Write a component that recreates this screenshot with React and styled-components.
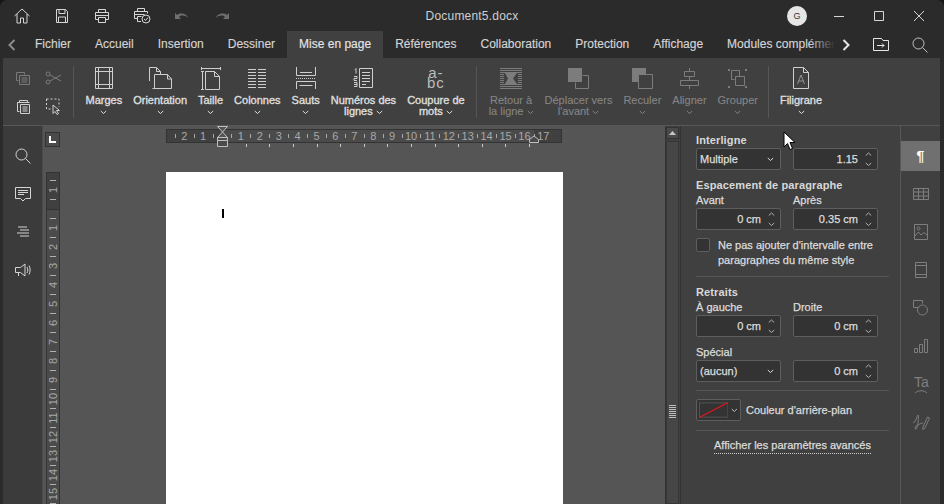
import React from 'react'
import styled, { createGlobalStyle } from 'styled-components'

const GlobalStyle = createGlobalStyle`
  html, body { margin: 0; height: 100%; background: #161616; overflow: hidden; }
  #root { height: 100%; }
  * { box-sizing: border-box; }
`

const Window = styled.div`
  position: relative;
  width: 944px;
  height: 504px;
  display: flex;
  flex-direction: column;
  background: #2b2b2b;
  border-radius: 7px 7px 0 0;
  overflow: hidden;
  font-family: "Liberation Sans", Arial, sans-serif;
  font-size: 11px;
  color: #d8d8d8;
`

const TitleBar = styled.div`
  height: 31px;
  flex: none;
  display: grid;
  grid-template-columns: 1fr auto 1fr;
  align-items: center;
`

const IconRow = styled.div`
  display: flex;
  align-items: center;
  padding-left: ${({ $pad }) => $pad || 0}px;
  padding-right: ${({ $padR }) => $padR || 0}px;
  justify-content: ${({ $end }) => ($end ? 'flex-end' : 'flex-start')};
`

const TitleBtn = styled.div`
  width: 40px;
  height: 31px;
  display: flex;
  align-items: center;
  justify-content: center;
  color: ${({ $off }) => ($off ? '#6e6e6e' : '#d6d6d6')};
`

const DocName = styled.div`
  font-size: 12px;
  letter-spacing: 0.2px;
  color: #cfcfcf;
`

const Avatar = styled.div`
  width: 20px;
  height: 20px;
  margin-right: 12px;
  border-radius: 50%;
  background: #e6e6e6;
  color: #333;
  font-size: 9px;
  display: flex;
  align-items: center;
  justify-content: center;
`

const TabBar = styled.div`
  height: 27px;
  flex: none;
  display: flex;
  align-items: stretch;
`

const ChevronBtn = styled.div`
  flex: none;
  width: ${({ $w }) => $w}px;
  display: flex;
  align-items: center;
  justify-content: center;
  color: ${({ $tone }) => $tone || '#e6e6e6'};
`

const TabStrip = styled.div`
  width: 812px;
  display: flex;
  overflow: hidden;
  position: relative;
  &::after {
    content: '';
    position: absolute;
    right: 0;
    top: 0;
    bottom: 0;
    width: 26px;
    background: linear-gradient(to right, rgba(43, 43, 43, 0), #2b2b2b);
  }
`

const Tab = styled.div`
  flex: none;
  padding: 0 12px;
  font-size: 12px;
  line-height: 26px;
  color: ${({ $active }) => ($active ? '#e4e4e4' : '#d4d4d4')};
  background: ${({ $active }) => ($active ? '#404040' : 'transparent')};
  -webkit-text-stroke: 0.15px currentColor;
`

const TabTools = styled.div`
  display: flex;
  margin-left: 4px;
`

const Ribbon = styled.div`
  height: 68px;
  flex: none;
  margin: 0 4px 0 3px;
  padding: 8px 0 0 3px;
  display: flex;
  align-items: flex-start;
  background: #404040;
  border-bottom: 1px solid #575757;
`

const ClipGrid = styled.div`
  display: grid;
  grid-template-columns: 30px 30px;
  grid-auto-rows: 28px;
  margin: -2px 0 0 2px;
  place-items: center;
`

const ClipCell = styled.div`
  display: flex;
  color: ${({ $off }) => ($off ? '#7a7a7a' : '#d0d0d0')};
`

const Sep = styled.div`
  width: 1px;
  height: 52px;
  flex: none;
  margin: 0 ${({ $r }) => $r ?? 6}px 0 ${({ $l }) => $l ?? 6}px;
  background: #565656;
`

const RibbonItem = styled.div`
  flex: none;
  padding: 0 5.5px;
  display: flex;
  flex-direction: column;
  align-items: center;
  color: ${({ $off }) => ($off ? '#858585' : '#e0e0e0')};
  -webkit-text-stroke: ${({ $off }) => ($off ? '0.1px' : '0.3px')} currentColor;
`

const RibbonIcon = styled.div`
  height: 22px;
  margin-bottom: 6px;
  margin-top: 1px;
  display: flex;
  align-items: center;
  justify-content: center;
  color: ${({ $off }) => ($off ? '#7c7c7c' : '#cfcfcf')};
  -webkit-text-stroke: 0;
`

const RibbonLabel = styled.div`
  text-align: center;
  line-height: 11px;
  white-space: pre;
  font-size: 11px;
`

const HyphenIcon = styled.div`
  font-size: 15px;
  line-height: 10px;
  letter-spacing: 1px;
  text-align: center;
  color: #bdbdbd;
  -webkit-text-stroke: 0;
`

const Body = styled.div`
  flex: 1;
  min-height: 0;
  display: flex;
  margin: 0 4px 0 3px;
`

const LeftRail = styled.div`
  width: 40px;
  flex: none;
  padding-top: 22px;
  display: flex;
  flex-direction: column;
  align-items: center;
  gap: 22px;
  background: #3b3b3b;
  border-right: 1px solid #4a4a4a;
  color: #d4d4d4;
`

const RailIcon = styled.div`
  height: 16px;
  display: flex;
  align-items: center;
  justify-content: center;
`

const Canvas = styled.div`
  flex: 1;
  min-width: 0;
  background: #555555;
  overflow: hidden;
  padding: 3px 0 0 2px;
`

const RulerRow = styled.div`
  display: flex;
  align-items: flex-start;
  height: 43px;
`

const Corner = styled.div`
  width: 15px;
  height: 15px;
  margin-top: 3px;
  border: 1px solid #333;
  background: #4a4a4a;
  display: flex;
  align-items: center;
  justify-content: center;
`

const HRuler = styled.svg`
  display: block;
  margin-left: 106px;
  overflow: visible;
`

const Sheet = styled.div`
  display: flex;
  align-items: flex-start;
  padding-left: 1px;
`

const VRuler = styled.svg`
  display: block;
  flex: none;
`

const Page = styled.div`
  width: 397px;
  height: 340px;
  margin-left: 106px;
  background: #ffffff;
  position: relative;
`

const Caret = styled.div`
  position: absolute;
  left: 56px;
  top: 37px;
  width: 2px;
  height: 9px;
  background: #000;
`

const ScrollTrack = styled.div`
  width: 15px;
  flex: none;
  padding: 1px 1px 0 0;
  display: flex;
  flex-direction: column;
  background: #404040;
  border-left: 1px solid #333;
`

const ScrollUp = styled.div`
  height: 12px;
  background: #4a4a4a;
  border: 1px solid #333;
  display: flex;
  align-items: center;
  justify-content: center;
`

const ScrollThumb = styled.div`
  flex: 1;
  margin-top: 2px;
  display: flex;
  justify-content: center;
  align-items: center;
  background: #464646;
  border: 1px solid #363636;
`

const Grip = styled.div`
  width: 7px;
  height: 13px;
  margin-top: 177px;
  background: repeating-linear-gradient(to bottom, #bdbdbd 0 1px, transparent 1px 2px);
`

const Panel = styled.div`
  width: 220px;
  flex: none;
  padding: 8px 11px 0 15px;
  background: #404040;
  border-left: 1px solid #333;
  color: #dcdcdc;
  -webkit-text-stroke: 0.25px currentColor;
`

const Heading = styled.div`
  font-weight: 700;
  font-size: 11px;
  line-height: 13px;
  letter-spacing: 0.12px;
  -webkit-text-stroke: 0;
  color: #d8d8d8;
  margin-top: ${({ $top }) => $top || 0}px;
`

const FieldGrid = styled.div`
  display: grid;
  grid-template-columns: 85px 85px;
  column-gap: 12px;
  margin-top: ${({ $top }) => $top || 0}px;
`

const FieldLabel = styled.div`
  line-height: 13px;
  height: 14px;
  margin-top: ${({ $top }) => $top || 0}px;
`

const Field = styled.div`
  height: 22px;
  border: 1px solid #5e5e5e;
  border-radius: 2px;
  background: #333333;
  display: flex;
  align-items: center;
  padding: ${({ $select }) => ($select ? '0 6px 0 3px' : '0 3px 0 0')};
  justify-content: ${({ $select }) => ($select ? 'space-between' : 'flex-end')};
  color: #dddddd;
`

const Spin = styled.div`
  width: 11px;
  margin-left: 5px;
  display: flex;
  flex-direction: column;
  gap: 5px;
  align-items: center;
  color: #b5b5b5;
`

const CheckRow = styled.div`
  display: flex;
  gap: 8px;
  margin-top: 8px;
`

const CheckBox = styled.div`
  width: 14px;
  height: 14px;
  flex: none;
  border: 1px solid #5e5e5e;
  border-radius: 2px;
  background: #333333;
`

const CheckText = styled.div`
  line-height: 15px;
`

const Rule = styled.div`
  height: 1px;
  background: #555555;
  margin: ${({ $m }) => $m};
`

const ColorRow = styled.div`
  display: flex;
  align-items: center;
  gap: 5px;
  margin-top: 8px;
`

const ColorBtn = styled.div`
  width: 45px;
  height: 22px;
  border: 1px solid #5e5e5e;
  border-radius: 2px;
  background: #333333;
  padding: 1px 2px;
  display: flex;
  align-items: center;
  gap: 3px;
  color: #c8c8c8;
`

const LinkWrap = styled.div`
  display: flex;
  justify-content: center;
  margin-top: 7px;
`

const AdvancedLink = styled.div`
  line-height: 14px;
  border-bottom: 1px dotted #cfcfcf;
  padding-bottom: 1px;
`

const RightRail = styled.div`
  width: 40px;
  flex: none;
  padding-top: 15px;
  display: flex;
  flex-direction: column;
  gap: 8px;
  background: #404040;
  border-left: 1px solid #575757;
`

const RightTab = styled.div`
  height: 30px;
  display: flex;
  align-items: center;
  justify-content: center;
  background: ${({ $active }) => ($active ? '#707070' : 'transparent')};
  color: ${({ $active }) => ($active ? '#ffffff' : '#7e7e7e')};
`

const Pilcrow = styled.span`
  font-size: 14px;
  font-weight: 700;
`

const Pointer = styled.svg`
  position: absolute;
  left: 783px;
  top: 131px;
`

const Ico = ({ w = 16, h = 16, children, fill = 'none', ...rest }) => (
  <svg width={w} height={h} viewBox={`0 0 ${w} ${h}`} fill={fill} stroke="currentColor" strokeWidth="1" {...rest}>
    {children}
  </svg>
)

const Chev = ({ dir = 'down', color }) => {
  const d = dir === 'down' ? 'M.8 1 3.5 3.500 6.200 1' : 'M.8 3.500 3.500 1 6.200 3.500'
  return (
    <svg width="7" height="5" viewBox="0 0 7 5" fill="none" stroke={color || 'currentColor'} strokeWidth="1">
      <path d={d} />
    </svg>
  )
}

const icons = {
  home: <Ico w={18} h={18}><path d="M1.500 9 9 2l7.500 7M4 7v9h3.500v-5h3v5H14V7" /></Ico>,
  save: <Ico w={16} h={16}><path d="M2.500 1.500h9l2 2v11h-11zM5 1.500v4h6v-4M4.500 14.500v-5.500h7v5.500" /></Ico>,
  print: <Ico w={16} h={16}><path d="M4.500 4.500v-3h7v3M4.500 11.500h-3v-7h13v7h-3M4.500 9.500h7v5h-7zM1.500 7.500h13" /></Ico>,
  quick: <Ico w={18} h={17}><path d="M4.500 4.500v-3h7v3M4.500 11.500h-3v-7h13v2M4.500 9.500h4M4.500 9.500v5h3.500M1.500 7.500h10" /><circle cx="13" cy="12" r="4" /><path d="m11 12 1.500 1.500 2.500-3" /></Ico>,
  undo: <Ico w={16} h={10} fill="currentColor" stroke="none"><path d="M1 2v6h6L5 6c2-2 6-2 9 1-1-4-7-6-11-3z" /></Ico>,
  redo: <Ico w={16} h={10} fill="currentColor" stroke="none"><path d="M15 2v6H9l2-2C9 4 5 4 2 7c1-4 7-6 11-3z" /></Ico>,
  min: <Ico w={12} h={12}><path d="M1 6.500h10" /></Ico>,
  max: <Ico w={12} h={12}><path d="M1.500 1.500h9v9h-9z" /></Ico>,
  close: <Ico w={12} h={12}><path d="m1 1 10 10M11 1 1 11" /></Ico>,
  open: <Ico w={16} h={13}><path d="M.5 12.500V.5h8L10 2.500h5.500v10zM4 7.500h7M9 5.500l2 2-2 2" /></Ico>,
  search: <Ico w={16} h={16}><circle cx="6.500" cy="6.500" r="5.500" /><path d="m10.500 10.500 5 5" /></Ico>,
  copy: <Ico w={16} h={14}><path d="M1.500 1.500h8v2M1.500 1.500v8h2M4.500 4.500h10v9h-10zM6.500 7h6M6.500 9h6M6.500 11h6" /></Ico>,
  scissors: <Ico w={17} h={14}><circle cx="3" cy="3" r="2" /><circle cx="3" cy="11" r="2" /><path d="M5 4l11 6M5 10l11-6" /></Ico>,
  paste: <Ico w={15} h={15}><path d="M3.500 3.500h-2v9h2M3.500 1.500h8v2h-8zM4.500 5.500h9v9h-9zM6.500 8h5M6.500 10h5M6.500 12h5" /><path d="M1.500 3.500h12" /></Ico>,
  select: <Ico w={15} h={17}><path d="M.5 1h12.500v8M.5 1v10h5" strokeDasharray="2 2" /><path d="M7 7v8.500l2-2 2 3 1.500-1-2-3h3z" /></Ico>,
  margins: <Ico w={18} h={22}><path d="M.5.500h17v21H.5zM3.500.500v21M14.500.500v21M.5 4.500h17M.5 17.500h17" /></Ico>,
  orient: <Ico w={23} h={22}><path d="M.5 14V.500h7l4 4V7M7.500.500v4h4M5.500 21.500h-2M5.500 7.500v14h17V12l-4-4.500zM18.500 7.500V12h4" /></Ico>,
  size: <Ico w={20} h={23}><path d="M.5 1.500h19M.5 0v3M19.500 0v3M1.500 4v19M0 4.500h3M0 22.500h3M4.500 4.500h9l5 5v13h-14zM13.500 4.500v5h5" /></Ico>,
  columns: <Ico w={18} h={20}><path d="M0 1.500h8M10 1.500h8M0 4.500h8M10 4.500h8M0 7.500h8M10 7.500h8M0 10.500h8M10 10.500h8M0 13.500h8M10 13.500h8M0 16.500h8M10 16.500h8M0 19.500h8M10 19.500h8" /></Ico>,
  breaks: <Ico w={20} h={22}><path d="M.5 0v8.500h19V0M4 5.500h12" /><path d="M0 11.500h20" strokeDasharray="1 1" /><path d="M.5 22v-7.500h19V22M3.500 18.500h13" /></Ico>,
  numbers: <Ico w={20} h={20}><path d="M6.500.500h13v19h-13zM9 4.500h8M9 7.500h8M9 10.500h8M9 13.500h8M9 16.500h4M2 1.500l1-1v5M1 8.500h3v2H1v2h3M1 14.500h3v4H1M1 16.500h3" /></Ico>,
  retour: <Ico w={22} h={21}><path d="M0 .500h22M0 2.500h22M0 4.500h22M0 16.500h22M0 18.500h22M0 20.500h22M0 6.500h4M0 8.500h4M0 10.500h4M0 12.500h4M0 14.500h4M18 6.500h4M18 8.500h4M18 10.500h4M18 12.500h4M18 14.500h4" /><path d="M5 5h12l-4 5.500 4 5.500H5l3-5.500z" fill="currentColor" stroke="none" /></Ico>,
  front: <Ico w={21} h={21}><path d="M14.500 7.500h6v13h-13v-6" /><path d="M0 0h14v14H0z" fill="currentColor" stroke="none" /></Ico>,
  back: <Ico w={21} h={21}><path d="M0 0h14v6H6v8H0z" fill="currentColor" stroke="none" /><path d="M6.500 6.500h14v14h-14z" /></Ico>,
  align: <Ico w={19} h={21}><path d="M9.500 0v4M9.500 8v5M9.500 17v4M4.500 3.500h10v5h-10zM.5 12.500h18v5H.5z" /></Ico>,
  group: <Ico w={21} h={21}><path d="M4.500 2.500h8v6M4.500 2.500v9h3M8.500 8.500h9v9h-9z" /><path d="M1 1h2v2H1zM10 1h2M18 1h2v2h-2zM1 18h2v2H1zM18 18h2v2h-2z" fill="currentColor" stroke="none" /></Ico>,
  water: <Ico w={16} h={22}><path d="M.5.500h10l5 5v16H.5zM10.500.500v5h5" /><path d="m4.500 17 3.500-9 3.500 9M5.700 14h4.600" opacity=".55" /></Ico>,
  comment: <Ico w={16} h={15}><path d="M.5.500h15v11h-5L8 14l-2.500-2.500h-5zM3 3.500h10M3 5.500h10M3 7.500h6" /></Ico>,
  outline: <Ico w={14} h={12}><path d="M2 1h9M4 4h9M1 7h12M4 10h9" /></Ico>,
  speak: <Ico w={16} h={14}><path d="M.5 4.500h5L10 1v12L5.500 9.500h-5zM3.500 9.500V13M12 4c1 2 1 4 0 6M14 2.500c1.500 3 1.500 6 0 9" /></Ico>,
  table: <Ico w={16} h={12}><path d="M.5.500h15v11H.5zM.5 4h15M.5 8h15M5.500.500v11M10.500.500v11" /></Ico>,
  image: <Ico w={14} h={16}><path d="M.5.500h13v15H.5zM1 12l3.500-4L7 11l3-2.500 3.500 3" /><circle cx="4.500" cy="4.500" r="1.500" /></Ico>,
  header: <Ico w={12} h={16}><path d="M.5.500h11v15H.5zM.5 3.500h11M.5 12.500h11" /></Ico>,
  shape: <Ico w={15} h={16}><path d="M5.500 7.500h-5v-7h9v3" /><circle cx="9.500" cy="10" r="5" /></Ico>,
  chart: <Ico w={14} h={14}><path d="M.5 9.500h3v4h-3zM5.500 5.500h3v8h-3zM10.500.500h3v13h-3z" /></Ico>,
  sign: <Ico w={18} h={18}><path d="M1 10c3-1 4-7 5-8 1 0 0 6 0 8s-1 5-2 6-1-2 0-3c3-2 6-3 7-3M11 14l4.500-10 2 1-4.500 10-2.200 1.500z" /></Ico>,
  lcorner: <svg width="7" height="7" viewBox="0 0 7 7"><path d="M0 0h2v5h5v2H0z" fill="#fff" /></svg>,
}

const tabs = ['Fichier', 'Accueil', 'Insertion', 'Dessiner', 'Mise en page', 'Références', 'Collaboration', 'Protection', 'Affichage', 'Modules complémentaires']

const groupA = [
  { icon: 'margins', label: 'Marges' },
  { icon: 'orient', label: 'Orientation' },
  { icon: 'size', label: 'Taille' },
  { icon: 'columns', label: 'Colonnes' },
  { icon: 'breaks', label: 'Sauts' },
  { icon: 'numbers', label: 'Numéros des', second: 'lignes' },
  { hyphen: true, label: 'Coupure de', second: 'mots' },
]

const groupB = [
  { icon: 'retour', label: 'Retour à', second: 'la ligne' },
  { icon: 'front', label: 'Déplacer vers', second: "l'avant" },
  { icon: 'back', label: 'Reculer' },
  { icon: 'align', label: 'Aligner' },
  { icon: 'group', label: 'Grouper' },
]

const Item = ({ it, off }) => (
  <RibbonItem $off={off}>
    <RibbonIcon $off={off}>
      {it.hyphen ? <HyphenIcon>a-<br />bc</HyphenIcon> : icons[it.icon]}
    </RibbonIcon>
    <RibbonLabel>
      {it.label}
      <br />
      {it.second ? <>{it.second} <Chev /></> : <Chev />}
    </RibbonLabel>
  </RibbonItem>
)

const SpinField = ({ value }) => (
  <Field>
    {value}
    <Spin><Chev dir="up" /><Chev /></Spin>
  </Field>
)

const SelectField = ({ value }) => (
  <Field $select>
    {value}
    <Chev />
  </Field>
)

// ruler tick data is easier to keep as plain numbers
const hNums = [-2, -1, 1, 2, 3, 4, 5, 6, 7, 8, 9, 10, 11, 12, 13, 14, 15, 16, 17]
const hTabs = [80, 103, 127, 151, 174, 198, 221, 245, 269, 292, 316, 339, 363]

const HorizontalRuler = () => {
  const ox = 56
  const step = 18.9
  return (
    <HRuler width="400" height="22" viewBox="0 0 400 22">
      <rect x=".5" y=".5" width="395" height="13" fill="#4b4b4b" stroke="#333" />
      <rect x="1" y="1" width={ox - 1} height="12" fill="#404040" />
      <rect x="368" y="1" width="27" height="12" fill="#404040" />
      {hNums.map(n => (
        <text key={n} x={ox + n * step} y="11" textAnchor="middle" fontSize="11" fill="#a8a8a8" fontFamily="Liberation Sans">{Math.abs(n)}</text>
      ))}
      {Array.from({ length: 20 }, (_, i) => i - 3).map(i => (
        <rect key={i} x={Math.round(ox + (i + 0.5) * step)} y="5" width="1" height="4" fill="#a8a8a8" />
      ))}
      {hTabs.map(x => <rect key={x} x={x} y="15" width="1" height="3" fill="#c8c8c8" />)}
      <path d="M51.500-2.500h10L56.500 3zM51.500 8.500 56.500 3l5 5.500z" fill="#555" stroke="#c0c0c0" />
      <path d="M51.500 11.500h10v6h-10zM51.500 8.500h10v3h-10z" fill="#4b4b4b" stroke="#c0c0c0" />
      <path d="M363.500 13.500v-3l4.500-3.500 4.500 3.500v3z" fill="#4b4b4b" stroke="#c0c0c0" />
    </HRuler>
  )
}

const vNums = [{ n: 1, y: 18 }, ...Array.from({ length: 15 }, (_, i) => ({ n: i + 1, y: 56 + i * 19 }))]
const vTicks = [8, 27, 46, 65, 84, 103, 122, 141, 160, 179, 198, 217, 236, 255, 274, 293, 312, 331]

const VerticalRuler = () => (
  <VRuler width="14" height="340" viewBox="0 0 14 340">
    <rect x=".5" y=".5" width="13" height="339" fill="#4b4b4b" stroke="#333" />
    <rect x="1" y="1" width="12" height="36" fill="#404040" />
    <rect x="1" y="37" width="12" height="1" fill="#333" />
    {vNums.map(({ n, y }, i) => (
      <text key={i} x="0" y="0" transform={`translate(11 ${y}) rotate(-90)`} textAnchor="middle" fontSize="11" fill="#a8a8a8" fontFamily="Liberation Sans">{n}</text>
    ))}
    {vTicks.map(y => (
      <rect key={y} x="4" y={y} width="6" height="1" fill="#b0b0b0" />
    ))}
  </VRuler>
)

export default function App() {
  return (
    <>
      <GlobalStyle />
      <Window>
        <TitleBar>
          <IconRow $pad={2}>
            <TitleBtn>{icons.home}</TitleBtn>
            <TitleBtn>{icons.save}</TitleBtn>
            <TitleBtn>{icons.print}</TitleBtn>
            <TitleBtn>{icons.quick}</TitleBtn>
            <TitleBtn $off>{icons.undo}</TitleBtn>
            <TitleBtn $off>{icons.redo}</TitleBtn>
          </IconRow>
          <DocName>Document5.docx</DocName>
          <IconRow $end $padR={5}>
            <Avatar>G</Avatar>
            <TitleBtn>{icons.min}</TitleBtn>
            <TitleBtn>{icons.max}</TitleBtn>
            <TitleBtn>{icons.close}</TitleBtn>
          </IconRow>
        </TitleBar>

        <TabBar>
          <ChevronBtn $w={23} $tone="#8c8c8c">
            <svg width="8" height="12" viewBox="0 0 8 12" fill="none" stroke="currentColor" strokeWidth="2"><path d="M6.500 1 1.500 6l5 5" /></svg>
          </ChevronBtn>
          <TabStrip>
            {tabs.map((t, i) => <Tab key={t} $active={i === 4}>{t}</Tab>)}
          </TabStrip>
          <ChevronBtn $w={22}>
            <svg width="8" height="12" viewBox="0 0 8 12" fill="none" stroke="currentColor" strokeWidth="2"><path d="M1.500 1l5 5-5 5" /></svg>
          </ChevronBtn>
          <TabTools>
            <ChevronBtn $w={40}>{icons.open}</ChevronBtn>
            <ChevronBtn $w={38} $tone="#c4c4c4">{icons.search}</ChevronBtn>
          </TabTools>
        </TabBar>

        <Ribbon>
          <ClipGrid>
            <ClipCell $off>{icons.copy}</ClipCell>
            <ClipCell $off>{icons.scissors}</ClipCell>
            <ClipCell>{icons.paste}</ClipCell>
            <ClipCell>{icons.select}</ClipCell>
          </ClipGrid>
          <Sep $l={5} />
          {groupA.map(it => <Item key={it.label} it={it} />)}
          <Sep />
          {groupB.map(it => <Item key={it.label} it={it} off />)}
          <Sep $l={5} $r={5} />
          <Item it={{ icon: 'water', label: 'Filigrane' }} />
        </Ribbon>

        <Body>
          <LeftRail>
            <RailIcon>{icons.search}</RailIcon>
            <RailIcon>{icons.comment}</RailIcon>
            <RailIcon>{icons.outline}</RailIcon>
            <RailIcon>{icons.speak}</RailIcon>
          </LeftRail>

          <Canvas>
            <RulerRow>
              <Corner>{icons.lcorner}</Corner>
              <HorizontalRuler />
            </RulerRow>
            <Sheet>
              <VerticalRuler />
              <Page><Caret /></Page>
            </Sheet>
          </Canvas>

          <ScrollTrack>
            <ScrollUp>
              <svg width="7" height="4" viewBox="0 0 7 4"><path d="M3.500 0 7 4H0z" fill="#c8c8c8" /></svg>
            </ScrollUp>
            <ScrollThumb><Grip /></ScrollThumb>
          </ScrollTrack>

          <Panel>
            <Heading>Interligne</Heading>
            <FieldGrid $top={1}>
              <SelectField value="Multiple" />
              <SpinField value="1.15" />
            </FieldGrid>

            <Heading $top={9}>Espacement de paragraphe</Heading>
            <FieldGrid $top={2}>
              <FieldLabel>Avant</FieldLabel>
              <FieldLabel>Après</FieldLabel>
              <SpinField value="0 cm" />
              <SpinField value="0.35 cm" />
            </FieldGrid>

            <CheckRow>
              <CheckBox />
              <CheckText>Ne pas ajouter d'intervalle entre<br />paragraphes du même style</CheckText>
            </CheckRow>

            <Rule $m="8px 0 9px" />

            <Heading>Retraits</Heading>
            <FieldGrid $top={2}>
              <FieldLabel>À gauche</FieldLabel>
              <FieldLabel>Droite</FieldLabel>
              <SpinField value="0 cm" />
              <SpinField value="0 cm" />
            </FieldGrid>

            <FieldLabel $top={9}>Spécial</FieldLabel>
            <FieldGrid>
              <SelectField value="(aucun)" />
              <SpinField value="0 cm" />
            </FieldGrid>

            <Rule $m="8px 0 0" />

            <ColorRow>
              <ColorBtn>
                <svg width="31" height="16" viewBox="0 0 31 16">
                  <rect x=".5" y=".5" width="30" height="15" fill="none" stroke="#555" />
                  <path d="M0 16 31 0" stroke="#e8141e" strokeWidth="1.2" />
                </svg>
                <Chev />
              </ColorBtn>
              Couleur d'arrière-plan
            </ColorRow>

            <Rule $m="9px 0 0" />

            <LinkWrap><AdvancedLink>Afficher les paramètres avancés</AdvancedLink></LinkWrap>
          </Panel>

          <RightRail>
            <RightTab $active><Pilcrow>¶</Pilcrow></RightTab>
            <RightTab>{icons.table}</RightTab>
            <RightTab>{icons.image}</RightTab>
            <RightTab>{icons.header}</RightTab>
            <RightTab>{icons.shape}</RightTab>
            <RightTab>{icons.chart}</RightTab>
            <RightTab>
              <svg width="16" height="20" viewBox="0 0 16 20" fill="none" stroke="currentColor"><text x="1" y="13" fontSize="14" fill="currentColor" stroke="none" fontFamily="Liberation Sans">Ta</text><path d="M2 19c3-3 9-3 12 0" /></svg>
            </RightTab>
            <RightTab>{icons.sign}</RightTab>
          </RightRail>
        </Body>

        <Pointer width="13" height="20" viewBox="0 0 13 20">
          <path d="M1 1v15l3.500-3.500 2.500 6 2.500-1-2.500-6H12z" fill="#fff" stroke="#000" />
        </Pointer>
      </Window>
    </>
  )
}
